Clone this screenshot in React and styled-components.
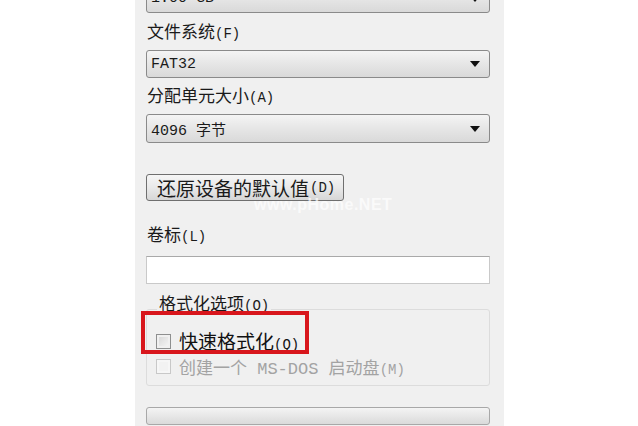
import styled, {createGlobalStyle} from "styled-components";

const GlobalStyle = createGlobalStyle`
    html, body {
        margin: 0;
        padding: 0;
        background: #ffffff;
        overflow: hidden;
    }
`;

const Page = styled.div`
    width: 638px;
    height: 426px;
    display: flex;
    overflow: hidden;
`;

const Panel = styled.div`
    margin-left: 135px;
    width: 369px;
    height: 426px;
    background: #f0f0f0;
    padding: 0 14px 0 11px;
    box-sizing: border-box;
    display: flex;
    flex-direction: column;
    font-family: "Liberation Mono", "Noto Sans CJK SC", monospace;
    color: #1a1a1a;
`;

const Label = styled.div`
    font-size: 17px;
    line-height: 20px;
    height: 20px;
    margin-top: ${p => p.$top}px;
    margin-left: 1px;
    white-space: nowrap;

    small {
        font-size: 14px;
    }
`;

const Combo = styled.div`
    height: ${p => p.$h || 29}px;
    margin-top: ${p => p.$top}px;
    box-sizing: border-box;
    border: 1px solid #8a8a8a;
    border-radius: 3px;
    background: linear-gradient(#f4f4f4, #e6e6e6 50%, #d9d9d9);
    display: flex;
    align-items: center;
    justify-content: space-between;
    padding: 0 9px 0 4px;
    font-size: 15px;
    flex-shrink: 0;
`;

const Arrow = styled.span`
    width: 0;
    height: 0;
    border-left: 5px solid transparent;
    border-right: 5px solid transparent;
    border-top: 6px solid #111;
`;

const ButtonRow = styled.div`
    position: relative;
    margin-top: 31px;
    height: 27px;
    flex-shrink: 0;
`;

const Button = styled.div`
    width: 198px;
    height: 27px;
    box-sizing: border-box;
    border: 1px solid #6f6f6f;
    border-radius: 3px;
    background: linear-gradient(#f6f6f6, #e9e9e9 50%, #d6d6d6);
    display: flex;
    align-items: center;
    padding-left: 10px;
    font-size: 19px;
    white-space: nowrap;

    small {
        font-size: 14px;
        margin-left: 1px;
    }
`;

// faint watermark stamped over the screenshot
const Watermark = styled.span`
    position: absolute;
    left: 108px;
    top: 22px;
    font-family: "Liberation Sans", sans-serif;
    font-weight: bold;
    font-size: 16px;
    color: rgba(255, 255, 255, 0.7);
    letter-spacing: 0.5px;
`;

const TextInput = styled.div`
    margin-top: 9px;
    height: 28px;
    box-sizing: border-box;
    border: 1px solid #c9c9c9;
    border-top-color: #a9a9a9;
    background: #fff;
    flex-shrink: 0;
`;

const Group = styled.div`
    position: relative;
    margin-top: 25px;
    height: 77px;
    box-sizing: border-box;
    border: 1px solid #dcdcdc;
    border-radius: 3px;
    padding: 21px 0 0 9px;
    display: flex;
    flex-direction: column;
    gap: 5px;
    flex-shrink: 0;
`;

const Legend = styled.span`
    position: absolute;
    left: 10px;
    top: -14px;
    padding: 0 2px;
    background: #f0f0f0;
    font-size: 17px;
    line-height: 20px;

    small {
        font-size: 14px;
    }
`;

const Check = styled.div`
    display: flex;
    align-items: center;
    gap: 8px;
    height: 20px;
    color: ${p => (p.$disabled ? "#a3a3a3" : "#111")};
    font-size: ${p => (p.$disabled ? 17 : 19)}px;
    white-space: nowrap;

    small {
        font-size: 14px;
    }
`;

const Box = styled.span`
    width: 15px;
    height: 15px;
    box-sizing: border-box;
    border: 1px solid ${p => (p.$disabled ? "#c8c8c8" : "#8e8f8f")};
    background: ${p => (p.$disabled ? "#f2f2f2" : "linear-gradient(135deg, #d4d4d4, #f8f8f8)")};
    box-shadow: inset 0 0 0 2px ${p => (p.$disabled ? "#f6f6f6" : "#f0f0f0")};
    flex-shrink: 0;
`;

const Highlight = styled.div`
    position: absolute;
    left: -6px;
    top: 1px;
    width: 168px;
    height: 43px;
    box-sizing: border-box;
    border: 4px solid #d8161c;
`;

const Progress = styled.div`
    margin-top: 21px;
    height: 18px;
    box-sizing: border-box;
    border: 1px solid #a8a8a8;
    border-radius: 3px;
    background: linear-gradient(#f4f4f4, #dadada);
    flex-shrink: 0;
`;

function App() {
  return (
    <Page>
      <GlobalStyle/>
      <Panel>
        <Combo $top={-16}>
          <span>1.00 GB</span>
          <Arrow/>
        </Combo>
        <Label $top={11}>文件系统<small>(F)</small></Label>
        <Combo $top={6} $h={28}>
          <span>FAT32</span>
          <Arrow/>
        </Combo>
        <Label $top={10}>分配单元大小<small>(A)</small></Label>
        <Combo $top={6}>
          <span>4096 字节</span>
          <Arrow/>
        </Combo>
        <ButtonRow>
          <Button>还原设备的默认值<small>(D)</small></Button>
          <Watermark>www.pHome.NET</Watermark>
        </ButtonRow>
        <Label $top={26}>卷标<small>(L)</small></Label>
        <TextInput/>
        <Group>
          <Legend>格式化选项<small>(O)</small></Legend>
          <Highlight/>
          <Check>
            <Box/>
            <span>快速格式化<small>(Q)</small></span>
          </Check>
          <Check $disabled>
            <Box $disabled/>
            <span>创建一个 MS-DOS 启动盘<small>(M)</small></span>
          </Check>
        </Group>
        <Progress/>
      </Panel>
    </Page>
  )
}

export default App
